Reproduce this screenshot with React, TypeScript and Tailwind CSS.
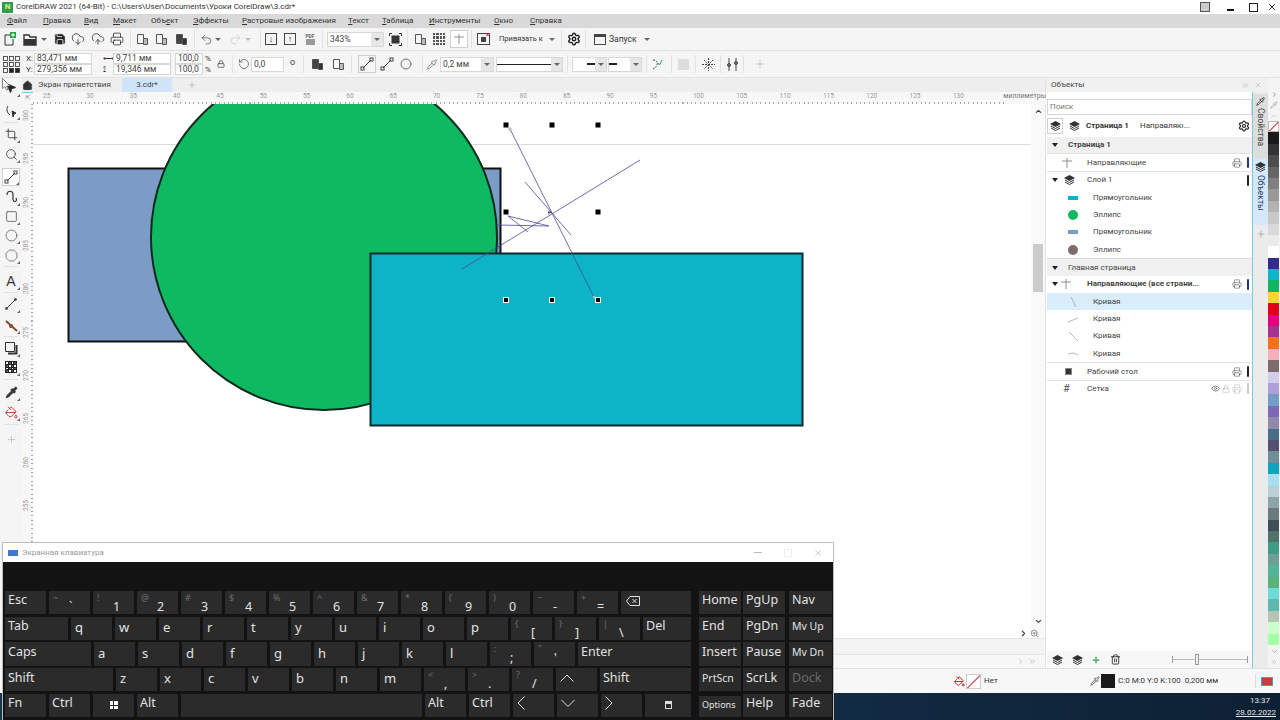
import {
  ChevronDown,
  ChevronRight,
  ChevronUp,
  ChevronsRight,
  Circle,
  CloudDownload,
  CloudUpload,
  Crop,
  Eye,
  House,
  Lock,
  MousePointer2,
  Octagon,
  PaintBucket,
  Pipette,
  Plus,
  Printer,
  Redo2,
  RotateCcw,
  Save,
  Search,
  Settings,
  Square,
  Trash2,
  Undo2,
  X,
  ZoomIn,
} from "lucide-react";
import type { ReactNode } from "react";

const caret = "w-0 h-0 border-l-[3px] border-r-[3px] border-t-[3px] border-l-transparent border-r-transparent border-t-[#666]";

function Caret({ className = "" }: { className?: string }) {
  return <div className={"shrink-0 " + caret + " " + className} />;
}

function Sep({ className = "" }: { className?: string }) {
  return <div className={"w-px h-[18px] bg-[#e2e2e2] shrink-0 " + className} />;
}

function Cell({ className = "", children }: { className?: string; children: ReactNode }) {
  return <div className={"w-[18px] h-[18px] flex items-center justify-center shrink-0 text-[#333] " + className}>{children}</div>;
}

function Field({ className = "", children }: { className?: string; children: ReactNode }) {
  return (
    <div className={"h-[11px] bg-white border border-[#d8d8d8] flex items-center pl-[2px] text-[8.5px] leading-none text-[#444] " + className}>
      {children}
    </div>
  );
}

function FileIcon({ plus }: { plus?: boolean }) {
  return (
    <svg width="14" height="14" viewBox="0 0 14 14" fill="none" stroke="#333" strokeWidth="1">
      <path d="M2 3h5M2 3v10h8V7" />
      {plus && <path d="M7 0h6v6H7z" fill="#22a34a" stroke="none" />}
      {plus && <path d="M10 1v4M8 3h4" stroke="#fff" />}
    </svg>
  );
}

function FolderIcon() {
  return (
    <svg width="14" height="13" viewBox="0 0 14 13">
      <path d="M1 2h5l1 2h6v8H1z" fill="none" stroke="#333" strokeWidth="1.4" />
      <path d="M1 6h12v6H1z" fill="#333" />
    </svg>
  );
}

function PagesIcon({ dark }: { dark?: boolean }) {
  return (
    <svg width="13" height="13" viewBox="0 0 13 13" fill="none" stroke="#555">
      <path d="M1.5 1.5h6v9h-6z" fill={dark ? "#444" : "none"} />
      <path d="M7.5 5.5h4v6h-4z" fill={dark ? "#333" : "#bbb"} />
    </svg>
  );
}

function ShapeHandles() {
  const spots = [0, 6, 12];
  return (
    <svg width="17" height="17" viewBox="0 0 17 17">
      {spots.map((y) =>
        spots.map((x) => (
          <rect key={x + "-" + y} x={x + 0.5} y={y + 0.5} width="4" height="4" fill={x === 6 && y === 12 ? "#222" : x === 12 && y === 12 ? "#222" : "none"} stroke="#333" strokeWidth="0.8" />
        ))
      )}
    </svg>
  );
}

function NodeLine({ size = 14 }: { size?: number }) {
  return (
    <svg width={size} height={size} viewBox="0 0 14 14" fill="none" stroke="#444">
      <path d="M3 11 11 3" />
      <rect x="1" y="10" width="3" height="3" />
      <rect x="10" y="1" width="3" height="3" />
    </svg>
  );
}

function LayersIcon() {
  return (
    <svg width="11" height="10" viewBox="0 0 11 10">
      <path d="M5.5 0 11 3 5.5 6 0 3z" fill="#333" />
      <path d="M1 5 5.5 7.5 10 5M1 7 5.5 9.5 10 7" fill="none" stroke="#333" />
    </svg>
  );
}

function GuideIcon() {
  return (
    <svg width="10" height="10" viewBox="0 0 10 10" stroke="#777" fill="none" strokeWidth="0.8">
      <path d="M0 3h10M5 0v10" />
    </svg>
  );
}

function PrintSmall({ dim }: { dim?: boolean }) {
  return <Printer size={10} strokeWidth={1.4} className={dim ? "text-[#bbb]" : "text-[#555]"} />;
}

function Toolbar() {
  return (
    <div className="h-[22px] bg-[#f5f5f5] flex items-center pl-px shrink-0">
      <Cell><FileIcon plus /></Cell>
      <Cell className="ml-[2px]"><FolderIcon /></Cell>
      <Caret className="ml-[2px]" />
      <Cell className="ml-[4px]"><Save size={14} fill="#222" strokeWidth={1.5} className="text-[#f5f5f5]" /></Cell>
      <Cell><CloudDownload size={14} strokeWidth={1.4} /></Cell>
      <Cell className="ml-[2px]"><CloudUpload size={14} strokeWidth={1.4} /></Cell>
      <Cell className="ml-px"><Printer size={14} strokeWidth={1.4} /></Cell>
      <Sep className="ml-[4px]" />
      <Cell className="ml-[2px]"><PagesIcon /></Cell>
      <Cell className="ml-px"><PagesIcon /></Cell>
      <Cell className="ml-[2px]"><PagesIcon dark /></Cell>
      <Sep className="ml-[4px]" />
      <Cell className="ml-[2px]"><Undo2 size={13} strokeWidth={1.4} className="text-[#555]" /></Cell>
      <Caret />
      <Cell className="ml-[5px]"><Redo2 size={13} strokeWidth={1.4} className="text-[#ccc]" /></Cell>
      <Caret className="ml-px opacity-40" />
      <Sep className="ml-[9px]" />
      <Cell className="ml-px">
        <div className="w-[12px] h-[12px] border border-[#444] flex items-center justify-center text-[9px] leading-none font-bold">↓</div>
      </Cell>
      <Cell className="ml-px">
        <div className="w-[12px] h-[12px] border border-[#444] flex items-center justify-center text-[9px] leading-none font-bold">↑</div>
      </Cell>
      <Cell className="ml-[2px]">
        <div className="flex flex-col items-center text-[5px] leading-[6px] text-[#666] font-bold">
          <span>PDF</span>
          <div className="w-[9px] h-[6px] bg-[#999]" />
        </div>
      </Cell>
      <Sep className="ml-[3px]" />
      <div className="ml-[4px] w-[57px] h-[15px] bg-white border border-[#d8d8d8] flex items-center shrink-0">
        <span className="pl-[2px] grow text-[8.5px] leading-none text-[#444]">343%</span>
        <div className="w-[12px] h-full bg-[#e6e6e6] flex items-center justify-center"><Caret /></div>
      </div>
      <Cell className="ml-[2px]">
        <svg width="13" height="13" viewBox="0 0 13 13" fill="none" stroke="#333">
          <path d="M.5 3V.5H3M10 .5h2.5V3M12.5 10v2.5H10M3 12.5H.5V10" />
          <rect x="2.5" y="2.5" width="8" height="8" fill="#333" stroke="none" />
        </svg>
      </Cell>
      <Sep className="ml-[3px]" />
      <Cell className="ml-[3px]"><PagesIcon /></Cell>
      <Cell className="ml-px">
        <div className="w-[12px] h-[12px] grid grid-cols-4 gap-px">
          {Array.from({ length: 16 }).map((_, i) => (
            <div key={i} className="bg-[#555]" />
          ))}
        </div>
      </Cell>
      <Cell className="ml-[2px] border border-[#cfcfcf] bg-white"><GuideIcon /></Cell>
      <Sep className="ml-[3px]" />
      <Cell className="ml-[2px]">
        <div className="w-[13px] h-[12px] border border-[#444] relative flex items-center justify-center">
          <span className="absolute -top-[2px] -right-px text-[#d22] text-[7px] leading-none font-bold">×</span>
          <span className="w-[5px] h-[5px] bg-[#444]" />
        </div>
      </Cell>
      <span className="ml-[7px] w-[45px] text-[7.5px] leading-none text-[#333] shrink-0 whitespace-nowrap">Привязать к</span>
      <Caret className="ml-[5px]" />
      <Sep className="ml-[6px]" />
      <Cell className="ml-[3px]"><Settings size={14} strokeWidth={2.4} className="text-[#222]" /></Cell>
      <Sep className="ml-[2px]" />
      <Cell className="ml-[5px]">
        <div className="w-[12px] h-[11px] border border-[#444] border-t-[3px]" />
      </Cell>
      <span className="w-[28px] text-[8.5px] leading-none text-[#333] shrink-0">Запуск</span>
      <Caret className="ml-[7px]" />
    </div>
  );
}

function PropBar() {
  return (
    <div className="h-[28px] bg-[#f5f5f5] border-t border-b border-[#e2e2e2] flex items-center shrink-0">
      <Cell className="ml-[2px] w-[19px]"><ShapeHandles /></Cell>
      <div className="ml-[5px] w-[8px] flex flex-col text-[8px] leading-[11px] text-[#333] shrink-0">
        <span>X:</span>
        <span>Y:</span>
      </div>
      <div className="w-[58px] shrink-0">
        <Field>83,471 мм</Field>
        <Field>279,356 мм</Field>
      </div>
      <div className="ml-[11px] w-[10px] flex flex-col text-[8px] leading-[11px] text-[#333] shrink-0">
        <span>⟷</span>
        <span>⟟</span>
      </div>
      <div className="w-[58px] shrink-0">
        <Field>9,711 мм</Field>
        <Field>19,346 мм</Field>
      </div>
      <div className="ml-[4px] w-[28px] shrink-0">
        <Field>100,0</Field>
        <Field>100,0</Field>
      </div>
      <div className="ml-[2px] w-[7px] flex flex-col text-[8px] leading-[11px] text-[#333] shrink-0">
        <span>%</span>
        <span>%</span>
      </div>
      <Lock size={8} strokeWidth={2} className="ml-[5px] shrink-0 text-[#333]" />
      <Sep className="ml-[7px]" />
      <RotateCcw size={12} strokeWidth={1.3} className="ml-[5px] shrink-0 text-[#444]" />
      <Field className="ml-px w-[33px] h-[15px] shrink-0">0,0</Field>
      <span className="ml-[6px] w-[8px] text-[9px] leading-none text-[#444] -mt-[4px] shrink-0">o</span>
      <Sep className="ml-[5px]" />
      <Cell className="ml-[4px]"><PagesIcon dark /></Cell>
      <Cell className="ml-[3px]"><PagesIcon /></Cell>
      <Sep className="ml-[4px]" />
      <Cell className="ml-[6px] w-[16px] border border-[#cfcfcf]"><NodeLine /></Cell>
      <Cell className="ml-[2px]"><NodeLine /></Cell>
      <Cell className="ml-px"><Circle size={12} strokeWidth={1.3} /></Cell>
      <Sep className="ml-[7px]" />
      <Pipette size={11} strokeWidth={1.3} className="ml-[3px] w-[12px] shrink-0 text-[#555]" />
      <div className="ml-[2px] w-[54px] h-[15px] bg-white border border-[#d8d8d8] flex items-center shrink-0">
        <span className="pl-[2px] grow text-[8.5px] leading-none text-[#444]">0,2 мм</span>
        <div className="w-[12px] h-full bg-[#e6e6e6] flex items-center justify-center"><Caret /></div>
      </div>
      <div className="ml-[2px] w-[67px] h-[15px] bg-white border border-[#d8d8d8] flex items-center shrink-0">
        <div className="grow h-px bg-[#222]" />
        <div className="w-[11px] h-full bg-[#e6e6e6] flex items-center justify-center"><Caret /></div>
      </div>
      <Sep className="ml-[4px]" />
      <div className="ml-[4px] w-[35px] h-[15px] bg-white border border-[#d8d8d8] flex items-center justify-end shrink-0">
        <div className="w-[8px] h-[1.5px] bg-[#222]" />
        <div className="w-[11px] h-full bg-[#e6e6e6] flex items-center justify-center"><Caret /></div>
      </div>
      <div className="ml-px w-[34px] h-[15px] bg-white border border-[#d8d8d8] flex items-center shrink-0">
        <div className="w-[8px] h-[1.5px] bg-[#222]" />
        <div className="grow" />
        <div className="w-[11px] h-full bg-[#e6e6e6] flex items-center justify-center"><Caret /></div>
      </div>
      <Sep className="ml-[4px]" />
      <Cell className="ml-px">
        <svg width="12" height="13" viewBox="0 0 12 13" fill="none">
          <path d="M2 2c4 0 5 3 4 5s-2 3-4 4" stroke="#444" strokeDasharray="2 1" />
          <path d="M7 5l1.5 2L11 2" stroke="#35a853" />
        </svg>
      </Cell>
      <Sep className="ml-[5px]" />
      <Cell className="ml-[2px]"><div className="w-[11px] h-[11px] bg-[#ddd]" /></Cell>
      <Sep className="ml-[3px]" />
      <Cell className="ml-[3px]">
        <svg width="13" height="13" viewBox="0 0 13 13" stroke="#444" strokeDasharray="2 1">
          <path d="M6.5 0v13M0 6.5h13M2 2l9 9M11 2l-9 9" />
        </svg>
      </Cell>
      <Sep className="ml-[3px]" />
      <Cell className="ml-[2px]">
        <svg width="13" height="13" viewBox="0 0 13 13" stroke="#444" fill="#777">
          <path d="M3 0v13M10 0v13" />
          <circle cx="3" cy="7" r="1.5" />
          <circle cx="10" cy="5" r="1.5" />
        </svg>
      </Cell>
      <Sep className="ml-[2px]" />
      <Cell className="ml-[7px]"><Plus size={12} strokeWidth={1.2} className="text-[#aaa]" /></Cell>
    </div>
  );
}

function Tool({ className = "", children, box }: { className?: string; children: ReactNode; box?: boolean }) {
  return (
    <div className={"w-[18px] h-[18px] mx-auto flex items-center justify-center shrink-0 relative text-[#333] " + (box ? "border border-[#cfcfcf] bg-white " : "") + className}>
      {children}
      <span className="absolute right-0 bottom-0 w-0 h-0 border-l-[3px] border-l-transparent border-b-[3px] border-b-[#666]" />
    </div>
  );
}

function ToolSep({ className = "" }: { className?: string }) {
  return <div className={"w-[14px] h-px bg-[#e2e2e2] mx-auto shrink-0 " + className} />;
}

function ToolBox() {
  return (
    <div className="w-[22px] bg-[#f5f5f5] flex flex-col shrink-0">
      <Tool className="mt-[1px]"><MousePointer2 size={12} fill="#222" /></Tool>
      <Tool className="mt-[5px]">
        <svg width="13" height="13" viewBox="0 0 13 13" fill="none" stroke="#333">
          <path d="M3 1C1 4 2 8 5 10" />
          <path d="M7 6l4 2-2 1-1 3z" fill="#222" />
        </svg>
      </Tool>
      <ToolSep className="mt-[2px]" />
      <Tool className="mt-[2px]"><Crop size={13} strokeWidth={1.6} /></Tool>
      <Tool className="mt-[2px]"><Search size={13} strokeWidth={1.4} /></Tool>
      <Tool className="mt-[5px]" box><NodeLine /></Tool>
      <Tool className="mt-[2px]">
        <svg width="13" height="14" viewBox="0 0 13 14" fill="none" stroke="#333" strokeWidth="1.2">
          <path d="M2 5c0-5 6-5 6 0v4c0 4 5 3 3-1" />
        </svg>
      </Tool>
      <Tool className="mt-px"><Square size={13} strokeWidth={1.2} /></Tool>
      <Tool className="mt-px"><Circle size={13} strokeWidth={1.1} /></Tool>
      <Tool className="mt-[2px]"><Octagon size={13} strokeWidth={1.1} /></Tool>
      <ToolSep className="mt-[2px]" />
      <Tool className="mt-[5px]"><span className="text-[14px] leading-none font-['Liberation_Sans',sans-serif]">A</span></Tool>
      <ToolSep className="mt-[2px]" />
      <Tool className="mt-[2px]">
        <svg width="12" height="12" viewBox="0 0 12 12" stroke="#444" fill="#444">
          <path d="M1 11 11 1" />
          <circle cx="1.5" cy="10.5" r="1" />
          <circle cx="10.5" cy="1.5" r="1" />
        </svg>
      </Tool>
      <Tool className="mt-[3px]">
        <svg width="13" height="13" viewBox="0 0 13 13" stroke="#8a4a30" strokeWidth="2">
          <path d="M1 2 12 12" />
          <circle cx="6" cy="7" r="1" fill="#333" />
        </svg>
      </Tool>
      <ToolSep className="mt-[2px]" />
      <Tool className="mt-[2px]">
        <svg width="14" height="14" viewBox="0 0 14 14" fill="none" stroke="#333">
          <path d="M1.5 1.5h9v9h-9z" />
          <path d="M12.5 4v8.5H4" strokeWidth="2" />
        </svg>
      </Tool>
      <Tool className="mt-px">
        <div className="w-[12px] h-[12px] bg-[#222] grid grid-cols-4 gap-px p-px">
          {Array.from({ length: 16 }).map((_, i) => (
            <div key={i} className={i % 2 === (i >> 2) % 2 ? "bg-white" : "bg-[#555]"} />
          ))}
        </div>
      </Tool>
      <ToolSep className="mt-[3px]" />
      <Tool className="mt-[3px]"><Pipette size={13} fill="#333" strokeWidth={1.4} /></Tool>
      <Tool className="mt-[2px]"><PaintBucket size={13} strokeWidth={1.5} className="text-[#a22]" /></Tool>
      <ToolSep className="mt-[3px]" />
      <div className="mt-[9px] flex justify-center"><Plus size={11} strokeWidth={1.2} className="text-[#aaa]" /></div>
    </div>
  );
}

const topMarks = ["25", "30", "35", "40", "45", "50", "55", "60", "65", "70", "75", "80", "85", "90", "95", "100", "105", "110", "115", "120", "125", "130"];
const sideMarks = ["300", "295", "290", "285", "280", "275", "270", "265", "260", "255", "250", "245"];

function TopRuler() {
  return (
    <div className="h-[12px] flex shrink-0 bg-[#f7f7f7]">
      <div className="w-[11px] shrink-0 flex items-center justify-center text-[7px] leading-none text-[#999]">⇱</div>
      <div className="grow relative bg-[#f7f7f7]">
        <div className="flex pl-[10px] text-[6.5px] leading-[8px] text-[#999]">
          {topMarks.map((m) => (
            <div key={m} className="w-[43.33px] shrink-0">{m}</div>
          ))}
          <span className="ml-[7px] text-[7px] text-[#777] whitespace-nowrap">миллиметры</span>
        </div>
        <div className="absolute left-0 right-[40px] bottom-0 h-[2px] bg-[repeating-linear-gradient(90deg,#aaa_0_1px,transparent_1px_4.33px)]" />
      </div>
    </div>
  );
}

function SideRuler() {
  return (
    <div className="w-[11px] bg-[#f7f7f7] shrink-0 flex flex-col relative overflow-hidden">
      {sideMarks.map((m) => (
        <div key={m} className="h-[43.33px] pt-[6px] shrink-0 text-[6.5px] leading-[8px] text-[#999]">
          <div className="[writing-mode:vertical-rl] rotate-180">{m}</div>
        </div>
      ))}
      <div className="absolute top-0 bottom-0 right-0 w-[2px] bg-[repeating-linear-gradient(180deg,#aaa_0_1px,transparent_1px_4.33px)]" />
    </div>
  );
}

function Handle({ x, y, ring }: { x: number; y: number; ring?: boolean }) {
  return <rect x={x - 2.5} y={y - 2.5} width="5" height="5" fill="#000" stroke={ring ? "#fff" : "none"} strokeWidth="1" />;
}

function Drawing() {
  return (
    <svg className="block w-[998px] h-[534px] bg-white shrink-0" viewBox="33 104 998 534">
      <path d="M33 144.5H1031" stroke="#dcdcdc" strokeWidth="1" />
      <rect x="68.5" y="168.5" width="432" height="173" fill="#7a9cc6" stroke="#111" strokeWidth="2" />
      <circle cx="324" cy="237" r="173" fill="#0fb962" stroke="#0b2a1c" strokeWidth="2" />
      <rect x="370.5" y="253.5" width="432" height="172" fill="#0db4c6" stroke="#0b2a30" strokeWidth="2" />
      <g fill="none" stroke="#4a4aa0" strokeWidth="0.8">
        <path d="M510 129 594 297" />
        <path d="M640 160 462 269" />
        <path d="M525 182 571 235" />
        <path d="M508 216 549 226 498 225" />
        <path d="M508 216 528 232" />
      </g>
      <circle cx="510" cy="129" r="1.2" fill="#fff" stroke="#555" strokeWidth="0.5" />
      <circle cx="594" cy="297" r="1.2" fill="#fff" stroke="#555" strokeWidth="0.5" />
      <Handle x={506} y={125} />
      <Handle x={552} y={125} />
      <Handle x={598} y={125} />
      <Handle x={506} y={212} />
      <Handle x={598} y={212} />
      <Handle x={506} y={300} ring />
      <Handle x={552} y={300} ring />
      <Handle x={598} y={300} ring />
      <path d="M549 210.5v4M552 212.5h-4" stroke="#333" strokeWidth="0.8" />
    </svg>
  );
}

function CanvasArea() {
  return (
    <div className="grow flex flex-col min-w-0">
      <div className="h-[14px] bg-[#eeeeee] flex items-center shrink-0">
        <House size={11} fill="#333" strokeWidth={1} className="ml-[0px] shrink-0 text-[#333]" />
        <span className="ml-[5px] w-[84px] text-[8px] leading-none text-[#444] shrink-0">Экран приветствия</span>
        <div className="w-[50px] h-full bg-[#cfe4f8] flex items-center justify-center text-[8px] leading-none text-[#444] shrink-0">3.cdr*</div>
        <div className="ml-[15px]"><Plus size={10} className="text-[#bbb]" /></div>
      </div>
      <div className="h-px bg-[#7cc8d8] shrink-0 -mb-px relative" />
      <TopRuler />
      <div className="h-[534px] flex shrink-0">
        <SideRuler />
        <Drawing />
        <div className="w-[14px] bg-[#f9f9f9] flex flex-col items-center shrink-0">
          <ChevronUp size={9} strokeWidth={3} className="mt-[3px] text-[#444]" />
          <div className="mt-[128px] w-[10px] h-[50px] bg-[#cccccc]" />
          <ChevronDown size={9} strokeWidth={3} className="mt-[325px] text-[#444]" />
          <div className="mt-[3px] -ml-[19px] flex items-center gap-[2px]">
            <ChevronRight size={9} strokeWidth={3} className="text-[#444]" />
            <ZoomIn size={9} className="text-[#777]" />
          </div>
        </div>
      </div>
      <div className="h-[16px] bg-[#f4f4f4] border-t border-[#e4e4e4] shrink-0" />
      <div className="h-[14px] bg-[#f7f7f7] border-t border-[#e4e4e4] flex items-center justify-end pr-[8px] gap-[3px] shrink-0">
        <ChevronRight size={9} className="text-[#bbb]" />
        <ChevronsRight size={9} className="text-[#bbb]" />
      </div>
    </div>
  );
}

function ObjRow({ children, className = "", marker, printer, dimmed }: { children: ReactNode; className?: string; marker?: string; printer?: boolean; dimmed?: boolean }) {
  return (
    <div className={"h-[17.35px] flex items-center text-[8px] leading-none text-[#444] shrink-0 " + className}>
      {children}
      <div className="grow" />
      {dimmed && <Eye size={9} className="text-[#666] mr-[2px]" />}
      {dimmed && <Lock size={8} className="text-[#bbb] mr-[2px]" />}
      {printer && <PrintSmall dim={dimmed} />}
      {marker && <div className={"ml-[5px] mr-[3px] w-[2.5px] h-[11px] rounded-sm " + marker} />}
    </div>
  );
}

function Triangle() {
  return <div className="w-0 h-0 border-l-[3px] border-r-[3px] border-t-[4px] border-l-transparent border-r-transparent border-t-[#222] shrink-0" />;
}

function CurveRow({ d, selected }: { d: string; selected?: boolean }) {
  return (
    <ObjRow className={selected ? "bg-[#daedfa]" : ""}>
      <svg width="12" height="12" viewBox="0 0 12 12" className="ml-[20px] shrink-0" fill="none" stroke="#999" strokeWidth="0.7">
        <path d={d} />
      </svg>
      <span className="ml-[14px]">Кривая</span>
    </ObjRow>
  );
}

function ObjectsPanel() {
  return (
    <div className="w-[223px] flex flex-col border-l border-[#e2e2e2] bg-white shrink-0">
      <div className="h-[14px] bg-[#f0f0f0] flex items-center shrink-0">
        <span className="ml-[5px] text-[8px] leading-none text-[#444]">Объекты</span>
        <div className="grow" />
        <ChevronsRight size={9} className="text-[#bbb]" />
        <X size={8} className="ml-[4px] mr-[6px] text-[#bbb]" />
      </div>
      <div className="grow flex min-h-0">
        <div className="w-[206px] pl-px flex flex-col shrink-0">
          <div className="mt-[7px] h-[16px] border border-[#d8d8d8] flex items-center pl-[2px] text-[8px] leading-none text-[#777] shrink-0">Поиск</div>
          <div className="h-[22px] flex items-center text-[8px] leading-none text-[#333] shrink-0">
            <div className="w-[16px] h-[16px] border border-[#cfcfcf] flex items-center justify-center shrink-0"><LayersIcon /></div>
            <div className="ml-[6px]"><LayersIcon /></div>
            <span className="ml-[6px] font-bold w-[54px]">Страница 1</span>
            <span>Направляю...</span>
            <div className="grow" />
            <Settings size={12} strokeWidth={2.4} className="mr-[2px] text-[#222]" />
          </div>
          <ObjRow className="bg-[#f0f0f0] border-b border-[#e0e0e0] font-bold text-[#333]">
            <div className="ml-[5px]"><Triangle /></div>
            <span className="ml-[10px]">Страница 1</span>
          </ObjRow>
          <ObjRow printer marker="bg-[#23329a]" className="border-b border-[#e4e4e4]">
            <div className="ml-[15px]"><GuideIcon /></div>
            <span className="ml-[15px]">Направляющие</span>
          </ObjRow>
          <ObjRow marker="bg-[#222]">
            <div className="ml-[5px]"><Triangle /></div>
            <div className="ml-[6px]"><LayersIcon /></div>
            <span className="ml-[12px]">Слой 1</span>
          </ObjRow>
          <ObjRow>
            <div className="ml-[21px] w-[10px] h-[4px] bg-[#0fb2c8] shrink-0" />
            <span className="ml-[15px]">Прямоугольник</span>
          </ObjRow>
          <ObjRow>
            <div className="ml-[21px] w-[10px] h-[10px] rounded-full bg-[#0fb962] shrink-0" />
            <span className="ml-[15px]">Эллипс</span>
          </ObjRow>
          <ObjRow>
            <div className="ml-[21px] w-[10px] h-[4px] bg-[#7a9cc6] shrink-0" />
            <span className="ml-[15px]">Прямоугольник</span>
          </ObjRow>
          <ObjRow>
            <div className="ml-[21px] w-[10px] h-[10px] rounded-full bg-[#7d6d6a] shrink-0" />
            <span className="ml-[15px]">Эллипс</span>
          </ObjRow>
          <ObjRow className="bg-[#f0f0f0] border-t border-[#e0e0e0]">
            <div className="ml-[5px]"><Triangle /></div>
            <span className="ml-[10px]">Главная страница</span>
          </ObjRow>
          <ObjRow printer marker="bg-[#23329a]" className="font-bold text-[#333]">
            <div className="ml-[5px]"><Triangle /></div>
            <div className="ml-[3px]"><GuideIcon /></div>
            <span className="ml-[16px]">Направляющие (все страни...</span>
          </ObjRow>
          <CurveRow selected d="M4 1l5 10" />
          <CurveRow d="M1 9l10-4" />
          <CurveRow d="M2 2l9 9" />
          <CurveRow d="M1 6l5-1 5 2" />
          <ObjRow printer marker="bg-[#222]" className="border-t border-[#e4e4e4]">
            <div className="ml-[18px] w-[7px] h-[7px] bg-[#333] border border-[#888] shrink-0" />
            <span className="ml-[15px]">Рабочий стол</span>
          </ObjRow>
          <ObjRow printer dimmed marker="bg-[#ccc]" className="border-t border-[#e4e4e4]">
            <span className="ml-[16px] w-[10px] text-[11px] text-[#555]">#</span>
            <span className="ml-[14px]">Сетка</span>
          </ObjRow>
          <div className="grow" />
          <div className="h-[17px] bg-[#f7f7f7] flex items-center shrink-0">
            <div className="ml-[3px] w-[14px] flex justify-center"><LayersIcon /></div>
            <div className="ml-[6px] w-[14px] flex justify-center"><LayersIcon /></div>
            <div className="ml-[5px] w-[14px] flex justify-center text-[#35a853]"><Plus size={10} strokeWidth={3} /></div>
            <div className="ml-[5px] w-[14px] flex justify-center"><Trash2 size={11} strokeWidth={2} className="text-[#333]" /></div>
            <div className="ml-[50px] w-[76px] h-[7px] border-x border-[#999] relative flex items-center">
              <div className="w-full h-px bg-[#bbb]" />
              <div className="absolute left-[22px] top-[-2px] w-[4px] h-[11px] bg-[#eee] border border-[#999]" />
            </div>
          </div>
        </div>
        <div className="w-[16px] bg-[#ebebeb] border-l border-[#7cc8d8] flex flex-col items-center shrink-0">
          <div className="mt-[2px] w-full h-[64px] bg-[#dddddd] flex flex-col items-center gap-[2px] pt-[3px] shrink-0">
            <Pipette size={9} className="text-[#222]" />
            <span className="[writing-mode:vertical-rl] text-[8.5px] leading-none text-[#444]">Свойства</span>
          </div>
          <div className="w-full h-[67px] bg-[#d5e8fa] flex flex-col items-center gap-[3px] pt-[4px] shrink-0">
            <LayersIcon />
            <span className="[writing-mode:vertical-rl] text-[8.5px] leading-none text-[#1a3a6a]">Объекты</span>
          </div>
          <Plus size={10} className="mt-[4px] text-[#aaa]" />
        </div>
      </div>
    </div>
  );
}

const swatches = [
  "bg-[#1a1a1a]", "bg-[#333333]", "bg-[#4d4d4d]", "bg-[#666666]", "bg-[#808080]", "bg-[#999999]", "bg-[#b3b3b3]", "bg-[#c8c8c8]", "bg-[#d9d9d9]", "bg-[#ebebeb]", "bg-white",
  "bg-[#332c8f]", "bg-[#0db5c9]", "bg-[#0fb560]", "bg-[#fdd835]", "bg-[#e2001a]", "bg-[#e6007e]", "bg-[#a8328f]", "bg-[#f37021]", "bg-[#f7adba]", "bg-[#7d6d6a]",
  "bg-[#d3cdea]", "bg-[#aea0d8]", "bg-[#739cc8]", "bg-[#7f67b8]", "bg-[#9188ae]", "bg-[#4a6d8c]", "bg-[#54506f]", "bg-[#6e8f98]", "bg-[#0da5bd]", "bg-[#a6dfef]", "bg-[#b9d0d6]", "bg-[#8ea5a8]", "bg-[#6b7a7d]", "bg-[#3f4f55]", "bg-[#4f7269]", "bg-[#3f9b82]", "bg-[#6d9f95]", "bg-[#53b496]", "bg-[#58b27a]", "bg-[#6cdcd8]", "bg-[#5db8ae]", "bg-[#b5c5b5]", "bg-[#ccffcc]", "bg-[#a5ffa5]",
];

function Palette() {
  return (
    <div className="w-[12px] bg-[#f4f4f4] flex flex-col shrink-0">
      <div className="h-[43px] flex flex-col items-center justify-end gap-[3px] pb-[1px] shrink-0">
        <ChevronRight size={7} strokeWidth={3} className="text-[#888]" />
        <Pipette size={8} className="text-[#aaa]" />
        <ChevronUp size={8} className="text-[#bbb]" />
      </div>
      <div className="w-[11px] h-[11.4px] bg-white border border-[#bbb] relative overflow-hidden shrink-0">
        <div className="absolute left-[-2px] top-[4px] w-[14px] h-px bg-[#c33] -rotate-45" />
      </div>
      {swatches.map((c, i) => (
        <div key={i} className={"w-[11px] h-[11.4px] shrink-0 " + c} />
      ))}
      <div className="flex flex-col items-center gap-[2px] mt-[2px]">
        <ChevronDown size={9} className="text-[#999]" />
        <ChevronsRight size={8} className="text-[#bbb]" />
      </div>
    </div>
  );
}

function StatusBar() {
  return (
    <div className="h-[25px] bg-[#f7f7f7] border-t border-[#e2e2e2] flex items-center shrink-0 text-[8px] leading-none text-[#333]">
      <PaintBucket size={11} className="ml-[954px] shrink-0 text-[#a22]" />
      <div className="ml-px w-[15px] h-[15px] bg-white border border-[#ccc] relative overflow-hidden shrink-0">
        <div className="absolute left-[-3px] top-[6px] w-[20px] h-px bg-[#c33] -rotate-45" />
      </div>
      <span className="ml-[3px] w-[14px] shrink-0">Нет</span>
      <Pipette size={10} className="ml-[92px] shrink-0 text-[#555]" />
      <div className="ml-[1px] w-[14px] h-[14px] bg-[#1a1a1a] shrink-0" />
      <span className="ml-[3px] w-[96px] whitespace-nowrap shrink-0 text-[8px]">C:0 M:0 Y:0 K:100&nbsp; 0,200 мм</span>
      <div className="ml-[41px] w-px h-[14px] bg-[#ddd] shrink-0" />
      <div className="ml-[5px] w-[12px] h-[9px] bg-[#c0404a] border border-[#4aa0b8] shrink-0" />
    </div>
  );
}

function Taskbar() {
  return (
    <div className="h-[27px] bg-gradient-to-r from-[#16384d] via-[#12304a] to-[#0e2033] flex flex-col items-end justify-center pr-[4px] text-[8px] leading-[12px] text-[#e6e6e6] shrink-0">
      <span className="pr-[6px]">13:37</span>
      <span className="underline">28.02.2022</span>
    </div>
  );
}

function Key({ w, children, shift, dim, small }: { w: string; children?: ReactNode; shift?: string; dim?: boolean; small?: boolean }) {
  if (shift !== undefined) {
    return (
      <div className={"h-[23.4px] bg-[#2b2b2b] shrink-0 " + w}>
        <div className="pl-[4px] pt-[2px] h-[10px] text-[9px] leading-[9px] text-[#6d6d6d]">{shift}</div>
        <div className="pl-[20px] text-[12.5px] leading-[12px] text-[#e2e2e2]">{children}</div>
      </div>
    );
  }
  return (
    <div
      className={
        "h-[23.4px] bg-[#2b2b2b] shrink-0 pl-[3px] flex items-center pb-[4px] leading-none " +
        (small ? "text-[10.5px] " : "text-[12.5px] ") +
        (dim ? "text-[#6a6a6a] " : "text-[#e2e2e2] ") +
        w
      }
    >
      {children}
    </div>
  );
}

const k = "w-[41px]";

function Letter({ children }: { children: ReactNode }) {
  return <div className={"h-[23.4px] bg-[#2b2b2b] shrink-0 pl-[4px] flex items-center text-[13px] leading-none pb-[2px] text-[#e2e2e2] " + k}>{children}</div>;
}

function Arrow({ d, w, h }: { d: string; w: number; h: number }) {
  return (
    <svg width={w} height={h} viewBox={`0 0 ${w} ${h}`} fill="none" stroke="#e2e2e2" className="ml-[1px]">
      <path d={d} />
    </svg>
  );
}

function Keyboard() {
  return (
    <div className="absolute left-[2px] top-[542px] w-[832px] h-[178px] flex flex-col border-t border-x border-[#bdbdbd] font-['Noto_Sans',sans-serif]">
      <div className="h-[19px] bg-white flex items-center shrink-0">
        <div className="ml-[5px] w-[10px] h-[6px] bg-[#3b7cc4] shrink-0" />
        <span className="ml-[4px] grow text-[8px] leading-none text-[#999] font-['Roboto',sans-serif]">Экранная клавиатура</span>
        <span className="w-[8px] h-px bg-[#bbb] shrink-0" />
        <span className="ml-[22px] w-[8px] h-[8px] border border-[#eee] shrink-0" />
        <X size={10} strokeWidth={1} className="ml-[21px] mr-[10px] shrink-0 text-[#888]" />
      </div>
      <div className="grow bg-[#131313] pt-[29px] pl-[2px] flex">
        <div className="w-[686px] flex flex-col gap-[2.3px] shrink-0">
          <div className="flex gap-[3px]">
            <Key w={k}>Esc</Key>
            <Key w={k} shift="~">`</Key>
            <Key w={k} shift="!">1</Key>
            <Key w={k} shift="@">2</Key>
            <Key w={k} shift="#">3</Key>
            <Key w={k} shift="$">4</Key>
            <Key w={k} shift="%">5</Key>
            <Key w={k} shift="^">6</Key>
            <Key w={k} shift="&">7</Key>
            <Key w={k} shift="*">8</Key>
            <Key w={k} shift="(">9</Key>
            <Key w={k} shift=")">0</Key>
            <Key w={k} shift="−">-</Key>
            <Key w={k} shift="+">=</Key>
            <Key w="w-[70px]">
              <svg width="14" height="10" viewBox="0 0 14 10" fill="none" stroke="#e2e2e2" className="ml-[2px]">
                <path d="M4 .5h9.5v9H4L.5 5zM6.5 3l4 4M10.5 3l-4 4" />
              </svg>
            </Key>
          </div>
          <div className="flex gap-[3px]">
            <Key w="w-[63px]">Tab</Key>
            <Letter>q</Letter>
            <Letter>w</Letter>
            <Letter>e</Letter>
            <Letter>r</Letter>
            <Letter>t</Letter>
            <Letter>y</Letter>
            <Letter>u</Letter>
            <Letter>i</Letter>
            <Letter>o</Letter>
            <Letter>p</Letter>
            <Key w={k} shift="{">[</Key>
            <Key w={k} shift="}">]</Key>
            <Key w={k} shift="|">\</Key>
            <Key w="w-[48px]">Del</Key>
          </div>
          <div className="flex gap-[3px]">
            <Key w="w-[86px]">Caps</Key>
            <Letter>a</Letter>
            <Letter>s</Letter>
            <Letter>d</Letter>
            <Letter>f</Letter>
            <Letter>g</Letter>
            <Letter>h</Letter>
            <Letter>j</Letter>
            <Letter>k</Letter>
            <Letter>l</Letter>
            <Key w={k} shift=":">;</Key>
            <Key w={k} shift={'"'}>'</Key>
            <Key w="w-[113px]">Enter</Key>
          </div>
          <div className="flex gap-[3px]">
            <Key w="w-[108px]">Shift</Key>
            <Letter>z</Letter>
            <Letter>x</Letter>
            <Letter>c</Letter>
            <Letter>v</Letter>
            <Letter>b</Letter>
            <Letter>n</Letter>
            <Letter>m</Letter>
            <Key w={k} shift="<">,</Key>
            <Key w={k} shift=">">.</Key>
            <Key w={k} shift="?">/</Key>
            <Key w={k}><Arrow w={14} h={8} d="M.5 7.5 7 1l6.5 6.5" /></Key>
            <Key w="w-[91px]">Shift</Key>
          </div>
          <div className="flex gap-[3px]">
            <Key w={k}>Fn</Key>
            <Key w={k}>Ctrl</Key>
            <div className={"h-[23.4px] bg-[#2b2b2b] shrink-0 flex items-center justify-center " + k}>
              <div className="w-[8px] h-[8px] grid grid-cols-2 gap-px">
                <div className="bg-white" />
                <div className="bg-white" />
                <div className="bg-white" />
                <div className="bg-white" />
              </div>
            </div>
            <Key w={k}>Alt</Key>
            <Key w="w-[241px]" />
            <Key w={k}>Alt</Key>
            <Key w={k}>Ctrl</Key>
            <Key w={k}><Arrow w={8} h={14} d="M7.5.5 1 7l6.5 6.5" /></Key>
            <Key w={k}><Arrow w={14} h={8} d="M.5 1 7 7.5 13.5 1" /></Key>
            <Key w={k}><Arrow w={8} h={14} d="M.5.5 7 7 .5 13.5" /></Key>
            <div className="h-[23.4px] w-[46px] bg-[#2b2b2b] shrink-0 flex items-center justify-center">
              <div className="w-[7px] h-[8px] border border-[#ddd] border-t-[3px]" />
            </div>
          </div>
        </div>
        <div className="ml-[8px] flex flex-col gap-[2.3px] shrink-0">
          <div className="flex">
            <Key w="w-[42px] mr-[2px]">Home</Key>
            <Key w="w-[42px] mr-[4px]">PgUp</Key>
            <Key w="w-[43px]">Nav</Key>
          </div>
          <div className="flex">
            <Key w="w-[42px] mr-[2px]">End</Key>
            <Key w="w-[42px] mr-[4px]">PgDn</Key>
            <Key w="w-[43px]" small>Mv Up</Key>
          </div>
          <div className="flex">
            <Key w="w-[42px] mr-[2px]">Insert</Key>
            <Key w="w-[42px] mr-[4px]">Pause</Key>
            <Key w="w-[43px]" small>Mv Dn</Key>
          </div>
          <div className="flex">
            <Key w="w-[42px] mr-[2px]" small>PrtScn</Key>
            <Key w="w-[42px] mr-[4px]">ScrLk</Key>
            <Key w="w-[43px]" dim>Dock</Key>
          </div>
          <div className="flex">
            <div className="w-[42px] mr-[2px] mt-[2px] h-[21px] bg-[#2b2b2b] shrink-0 pl-[3px] flex items-center pb-[4px] text-[9px] leading-none text-[#e2e2e2]">Options</div>
            <Key w="w-[42px] mr-[4px]">Help</Key>
            <Key w="w-[43px]">Fade</Key>
          </div>
        </div>
      </div>
    </div>
  );
}

export default function App() {
  return (
    <div className="w-[1280px] h-[720px] relative overflow-hidden flex flex-col bg-white font-['Roboto',sans-serif]">
      <div className="h-[14px] bg-white flex items-center shrink-0">
        <div className="ml-[2px] w-[11px] h-[11px] bg-[#2f9e44] flex items-center justify-center text-[8px] leading-none font-bold text-[#d7f0a0] shrink-0">N</div>
        <span className="ml-[3px] text-[8px] leading-none text-[#333]">CorelDRAW 2021 (64-Bit) - C:\Users\User\Documents\Уроки CorelDraw\3.cdr*</span>
        <div className="grow" />
        <div className="w-[10px] h-[10px] bg-[#ccc] border border-[#555] shrink-0" />
        <div className="ml-[17px] w-[7px] h-[2px] mt-[5px] bg-[#111] shrink-0" />
        <div className="ml-[15px] w-[9px] h-[9px] border border-[#222] shrink-0" />
        <X size={10} strokeWidth={2} className="ml-[9px] mr-[3px] shrink-0 text-[#111]" />
      </div>
      <div className="h-[14px] bg-[#d9d9d9] flex items-center pl-[7px] text-[8px] leading-none text-[#333] shrink-0">
        <span className="w-[36px]"><u>Ф</u>айл</span>
        <span className="w-[41px]"><u>П</u>равка</span>
        <span className="w-[29px]"><u>В</u>ид</span>
        <span className="w-[38px]"><u>М</u>акет</span>
        <span className="w-[42px]">Объ<u>е</u>кт</span>
        <span className="w-[49px]"><u>Э</u>ффекты</span>
        <span className="w-[106px]"><u>Р</u>астровые изображения</span>
        <span className="w-[34px]"><u>Т</u>екст</span>
        <span className="w-[47px]"><u>Т</u>аблица</span>
        <span className="w-[65px]"><u>И</u>нструменты</span>
        <span className="w-[36px]"><u>О</u>кно</span>
        <span><u>С</u>правка</span>
      </div>
      <Toolbar />
      <PropBar />
      <div className="h-[590px] flex shrink-0">
        <ToolBox />
        <CanvasArea />
        <ObjectsPanel />
        <Palette />
      </div>
      <StatusBar />
      <Taskbar />
      <Keyboard />
      <svg className="absolute left-[2px] top-[78px]" width="9" height="13" viewBox="0 0 9 13">
        <path d="M.5.5v10l2.500-2 1.500 3.500 1.500-.7-1.500-3.300h3.500z" fill="#fff" stroke="#555" strokeWidth="0.7" />
      </svg>
    </div>
  );
}
